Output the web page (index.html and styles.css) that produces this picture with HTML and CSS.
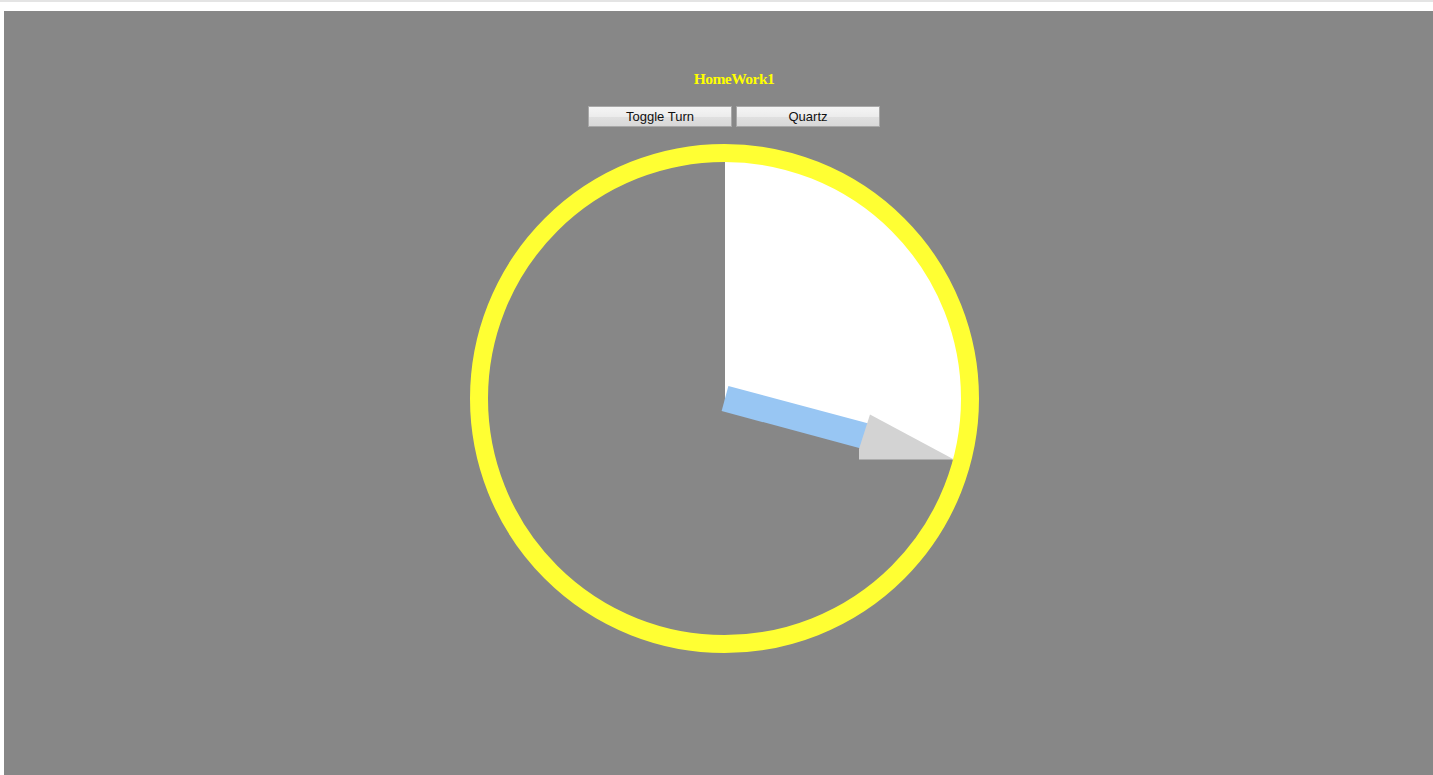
FILE: index.html
```html
<!DOCTYPE html>
<html>
<head>
<meta charset="utf-8">
<title>HomeWork1</title>
<link rel="stylesheet" href="styles.css">
</head>
<body>
<div class="topstrip"></div>
<div class="frame">
  <main class="stage">
    <header class="head">
      <h1 class="title">HomeWork1</h1>
      <div class="buttons">
        <button class="btn" type="button">Toggle Turn</button>
        <button class="btn" type="button">Quartz</button>
      </div>
    </header>
    <svg class="clock" width="510" height="510" viewBox="0 0 510 510" xmlns="http://www.w3.org/2000/svg">
      <path d="M256 255.5 L256 15.5 A240 240 0 0 1 487.8 317.6 Z" fill="#ffffff"/>
      <rect x="0" y="-13" width="150" height="26" fill="#98c6f3" transform="translate(256 255.5) rotate(15)"/>
      <polygon points="401,271.5 390,306 390,316.5 485,316.5" fill="#d3d3d3"/>
      <circle cx="255.5" cy="255.5" r="245.5" fill="none" stroke="#ffff33" stroke-width="18"/>
    </svg>
  </main>
</div>
</body>
</html>
```

FILE: styles.css
```css
html, body {
  margin: 0;
  padding: 0;
  background: #ffffff;
  overflow: hidden;
}

.topstrip {
  height: 2px;
  background: #e4e4e4;
}

.frame {
  padding: 9px 0 0 4px;
}

.stage {
  height: 764px;
  background: #878787;
  display: flex;
  flex-direction: column;
  align-items: center;
  padding-top: 59px;
  box-sizing: border-box;
}

.head {
  display: flex;
  flex-direction: column;
  align-items: center;
  margin-left: 31px;
}

.title {
  margin: 0;
  font-family: "Liberation Serif", "Times New Roman", serif;
  font-weight: bold;
  font-size: 15.5px;
  line-height: 18px;
  letter-spacing: -0.5px;
  color: #ffff00;
}

.buttons {
  display: flex;
  gap: 4px;
  margin-top: 18px;
}

.btn {
  width: 144px;
  height: 21px;
  margin: 0;
  padding: 0;
  border: 1px solid #a8a8a8;
  border-radius: 0;
  background: linear-gradient(#f5f5f5 0%, #ececec 50%, #e0e0e0 51%, #d8d8d8 100%);
  font-family: "Liberation Sans", Arial, sans-serif;
  font-size: 13px;
  color: #111111;
  line-height: 19px;
}

.clock {
  display: block;
  margin-top: 16px;
  margin-left: 10px;
}
```
